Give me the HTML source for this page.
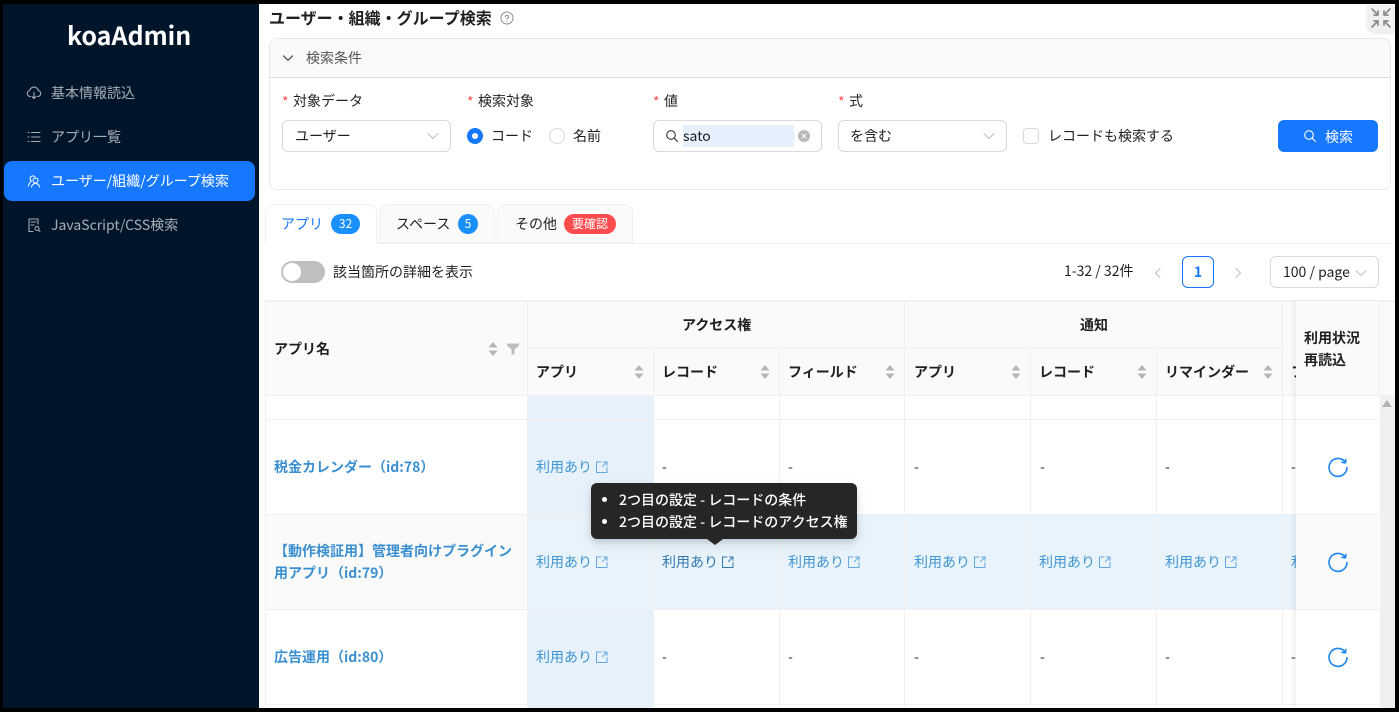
<!DOCTYPE html>
<html lang="ja"><head><meta charset="utf-8"><title>koaAdmin</title>
<style>
*{box-sizing:border-box}
html,body{margin:0;padding:0;width:1399px;height:712px;overflow:hidden;background:#000}
body{position:relative;font-family:"Noto Sans CJK JP","Liberation Sans",sans-serif;font-size:14px;color:rgba(0,0,0,.88)}
div,svg.a{position:absolute}
.t{white-space:nowrap;line-height:20px;position:absolute}
.b{font-weight:700}
.l{color:#4096d0}
.lb{color:#3a8fd0;font-weight:700;font-size:14px}
.m{color:rgba(255,255,255,.65);font-size:14px}
.s{position:absolute;fill:none;stroke-linecap:round;stroke-linejoin:round}
.ln{background:#f0f0f0}
.box{background:#fff;border:1px solid #d9d9d9;border-radius:6px}
.r{color:#ff4d4f;font-size:14px}
</style></head><body>
<div id="page" style="left:3px;top:4px;width:1392px;height:704px;background:#fff;overflow:hidden">
<div style="left:-3px;top:-4px;width:1399px;height:712px">

<!-- sidebar -->
<div style="left:3px;top:4px;width:256px;height:704px;background:#001529"></div>
<span class="t b" style="left:67px;top:20px;font-size:25px;line-height:30px;color:#fff">koaAdmin</span>
<div style="left:4px;top:161px;width:251px;height:40px;background:#1677ff;border-radius:8px"></div>
<svg class="s" style="left:26px;top:85px" width="16" height="16" viewBox="0 0 16 16" stroke="#a6adb4" stroke-width="1.100"><path d="M4.500 11.500H4A3 3 0 0 1 3.600 5.600 4.500 4.500 0 0 1 12.400 5.600 3 3 0 0 1 12 11.500H11.500M8 7.500V13.500M6.200 11.700 8 13.500 9.800 11.700"/></svg>
<span class="t m" style="left:51px;top:83px">基本情報読込</span>
<svg class="s" style="left:26px;top:129px" width="16" height="16" viewBox="0 0 16 16" stroke="#a6adb4" stroke-width="1.100"><path d="M5.500 3.500H14M5.500 8H14M5.500 12.500H14M2 3.500H3M2 8H3M2 12.500H3"/></svg>
<span class="t m" style="left:51px;top:127px">アプリ一覧</span>
<svg class="s" style="left:26px;top:173px" width="16" height="16" viewBox="0 0 16 16" stroke="#fff" stroke-width="1"><circle cx="9.500" cy="7.500" r="2.500"/><path d="M5.500 14C6 11.500 7.500 10.500 9.500 10.500S13 11.500 13.500 14M9 3.800A3 3 0 0 0 4 5C4 6.500 4.500 7.500 5.500 8C3.800 9 2.800 10.800 2.300 13"/></svg>
<span class="t" style="left:51px;top:171px;color:#fff">ユーザー/組織/グループ検索</span>
<svg class="s" style="left:26px;top:217px" width="16" height="16" viewBox="0 0 16 16" stroke="#a6adb4" stroke-width="1.100"><path d="M7 14.500H3V2H12V7M5 5H10M5 8H8"/><circle cx="11" cy="11.500" r="2"/><path d="M12.500 13 14 14.500"/></svg>
<span class="t m" style="left:51px;top:215px">JavaScript/CSS検索</span>

<!-- title -->
<span class="t b" style="left:269px;top:7px;font-size:16px">ユーザー・組織・グループ検索</span>
<svg class="s" style="left:500px;top:11px" width="14" height="14" viewBox="0 0 14 14" stroke="#8c8c8c" stroke-width="1"><circle cx="7" cy="7" r="6"/><path d="M5.400 5.600A1.600 1.600 0 1 1 7 7.400V8.200M7 10V10.100"/></svg>
<div style="left:1367px;top:5px;width:28px;height:27px;background:#f0f0f0;border-radius:0 0 0 8px;box-shadow:0 1px 3px rgba(0,0,0,.12)"></div>
<svg class="s" style="left:1368px;top:5px" width="26" height="26" viewBox="0 0 26 26" stroke="#8a8a8a" stroke-width="1.700"><path d="M4 4 10 10M6 10H10V6M22 4 16 10M20 10H16V6M4 22 10 16M6 16H10V20M22 22 16 16M20 16H16V20"/></svg>

<!-- search panel -->
<div style="left:269px;top:38px;width:1122px;height:152px;border:1px solid #e8e8e8;border-radius:8px;overflow:hidden;background:#fff">
  <div style="left:0;top:0;width:1120px;height:39px;background:#fafafa;border-bottom:1px solid #d9d9d9"></div>
</div>
<svg class="s" style="left:282px;top:52px" width="12" height="12" viewBox="0 0 12 12" stroke="#444" stroke-width="1.100"><path d="M1.500 3.800 6 8.300 10.500 3.800"/></svg>
<span class="t" style="left:306px;top:48px;color:#555">検索条件</span>

<span class="t r" style="left:282px;top:92px">*</span><span class="t" style="left:293px;top:91px">対象データ</span>
<span class="t r" style="left:467px;top:92px">*</span><span class="t" style="left:478px;top:91px">検索対象</span>
<span class="t r" style="left:653px;top:92px">*</span><span class="t" style="left:664px;top:91px">値</span>
<span class="t r" style="left:838px;top:92px">*</span><span class="t" style="left:849px;top:91px">式</span>

<div class="box" style="left:282px;top:120px;width:169px;height:32px"></div>
<span class="t" style="left:295px;top:126px">ユーザー</span>
<svg class="s" style="left:427px;top:130px" width="12" height="12" viewBox="0 0 12 12" stroke="#bfbfbf" stroke-width="1"><path d="M1 3.500 6 8.500 11 3.500"/></svg>

<div style="left:467px;top:128px;width:16px;height:16px;border-radius:50%;background:#1677ff"></div>
<div style="left:472px;top:133px;width:6px;height:6px;border-radius:50%;background:#fff"></div>
<span class="t" style="left:491px;top:126px">コード</span>
<div style="left:549px;top:128px;width:16px;height:16px;border-radius:50%;border:1px solid #d9d9d9;background:#fff"></div>
<span class="t" style="left:573px;top:126px">名前</span>

<div class="box" style="left:653px;top:120px;width:169px;height:32px"></div>
<div style="left:683px;top:125px;width:111px;height:22px;background:#e6f0fc"></div>
<svg class="s" style="left:665px;top:129px" width="14" height="14" viewBox="0 0 14 14" stroke="#333" stroke-width="1.100"><circle cx="6" cy="6" r="4.300"/><path d="M9.200 9.200 12.500 12.500"/></svg>
<span class="t" style="left:683px;top:126px">sato</span>
<div style="left:798px;top:130px;width:12px;height:12px;border-radius:50%;background:#b8b8b8"></div>
<svg class="s" style="left:798px;top:130px" width="12" height="12" viewBox="0 0 12 12" stroke="#fff" stroke-width="1"><path d="M4 4 8 8M8 4 4 8"/></svg>

<div class="box" style="left:838px;top:120px;width:169px;height:32px"></div>
<span class="t" style="left:850px;top:126px">を含む</span>
<svg class="s" style="left:983px;top:130px" width="12" height="12" viewBox="0 0 12 12" stroke="#bfbfbf" stroke-width="1"><path d="M1 3.500 6 8.500 11 3.500"/></svg>

<div class="box" style="left:1023px;top:128px;width:16px;height:16px;border-radius:4px"></div>
<span class="t" style="left:1048px;top:126px">レコードも検索する</span>

<div style="left:1278px;top:120px;width:100px;height:32px;background:#1677ff;border-radius:6px"></div>
<svg class="s" style="left:1303px;top:129px" width="14" height="14" viewBox="0 0 14 14" stroke="#fff" stroke-width="1.100"><circle cx="6" cy="6" r="4.300"/><path d="M9.200 9.200 12.500 12.500"/></svg>
<span class="t" style="left:1325px;top:127px;color:#fff">検索</span>

<!-- tabs -->
<div style="left:265px;top:243px;width:1126px;height:1px;background:#f0f0f0"></div>
<div style="left:265px;top:204px;width:112px;height:40px;background:#fff;border:1px solid #f0f0f0;border-bottom:0;border-radius:8px 8px 0 0"></div>
<div style="left:379px;top:204px;width:116px;height:39px;background:#fafafa;border:1px solid #f0f0f0;border-radius:8px 8px 0 0"></div>
<div style="left:497px;top:204px;width:136px;height:39px;background:#fafafa;border:1px solid #f0f0f0;border-radius:8px 8px 0 0"></div>
<span class="t" style="left:281px;top:214px;color:#1677ff">アプリ</span>
<div style="left:331px;top:214px;width:29px;height:20px;border-radius:10px;background:#1890ff"></div>
<span class="t" style="left:331px;top:214px;width:29px;text-align:center;color:#fff;font-size:12px">32</span>
<span class="t" style="left:396px;top:214px">スペース</span>
<div style="left:458px;top:214px;width:20px;height:20px;border-radius:10px;background:#1890ff"></div>
<span class="t" style="left:458px;top:214px;width:20px;text-align:center;color:#fff;font-size:12px">5</span>
<span class="t" style="left:515px;top:214px">その他</span>
<div style="left:564px;top:214px;width:52px;height:20px;border-radius:10px;background:#ff4d4f"></div>
<span class="t" style="left:564px;top:214px;width:52px;text-align:center;color:#fff;font-size:12px">要確認</span>

<!-- toolbar -->
<div style="left:281px;top:261px;width:44px;height:22px;border-radius:11px;background:#bfbfbf"></div>
<div style="left:283px;top:263px;width:18px;height:18px;border-radius:50%;background:#fff"></div>
<span class="t" style="left:333px;top:262px">該当箇所の詳細を表示</span>
<span class="t" style="left:1064px;top:261px;font-size:14px">1-32 / 32件</span>
<svg class="s" style="left:1152px;top:267px" width="12" height="12" viewBox="0 0 12 12" stroke="#bfbfbf" stroke-width="1.100"><path d="M8 1.500 3.500 6 8 10.500"/></svg>
<div style="left:1182px;top:256px;width:32px;height:32px;border:1px solid #1677ff;border-radius:6px;background:#fff"></div>
<span class="t" style="left:1182px;top:262px;width:32px;text-align:center;color:#1677ff;font-weight:700">1</span>
<svg class="s" style="left:1232px;top:267px" width="12" height="12" viewBox="0 0 12 12" stroke="#bfbfbf" stroke-width="1.100"><path d="M4 1.500 8.500 6 4 10.500"/></svg>
<div class="box" style="left:1270px;top:256px;width:109px;height:32px"></div>
<span class="t" style="left:1283px;top:262px">100 / page</span>
<svg class="s" style="left:1355px;top:267px" width="12" height="12" viewBox="0 0 12 12" stroke="#bfbfbf" stroke-width="1"><path d="M1 3.500 6 8.500 11 3.500"/></svg>

<!-- table backgrounds -->
<div style="left:265px;top:301px;width:1130px;height:95px;background:#fafafa"></div>
<div style="left:265px;top:300px;width:1130px;height:2px;background:#f0f0f0"></div>
<div style="left:527px;top:396px;width:126px;height:312px;background:#e6f1fb"></div>
<div style="left:265px;top:515px;width:262px;height:94px;background:#fafafa"></div>
<div style="left:527px;top:515px;width:769px;height:94px;background:#e8f3fb"></div>

<!-- horizontal lines -->
<div class="ln" style="left:527px;top:348px;width:755px;height:1px"></div>
<div class="ln" style="left:265px;top:395px;width:1031px;height:1px"></div>
<div class="ln" style="left:265px;top:419px;width:1031px;height:1px"></div>
<div class="ln" style="left:265px;top:514px;width:1031px;height:1px"></div>
<div class="ln" style="left:265px;top:609px;width:1031px;height:1px"></div>
<div class="ln" style="left:265px;top:704px;width:1031px;height:1px"></div>
<!-- vertical lines -->
<div class="ln" style="left:265px;top:301px;width:1px;height:407px"></div>
<div class="ln" style="left:527px;top:301px;width:1px;height:407px"></div>
<div class="ln" style="left:653px;top:349px;width:1px;height:359px"></div>
<div class="ln" style="left:779px;top:349px;width:1px;height:359px"></div>
<div class="ln" style="left:904px;top:301px;width:1px;height:407px"></div>
<div class="ln" style="left:1030px;top:349px;width:1px;height:359px"></div>
<div class="ln" style="left:1156px;top:349px;width:1px;height:359px"></div>
<div class="ln" style="left:1282px;top:301px;width:1px;height:407px"></div>

<!-- headers -->
<span class="t b" style="left:274px;top:339px">アプリ名</span>
<span class="t b" style="left:682px;top:315px;font-size:14px">アクセス権</span>
<span class="t b" style="left:1080px;top:315px;font-size:14px">通知</span>
<span class="t b" style="left:536px;top:362px">アプリ</span>
<span class="t b" style="left:662px;top:362px">レコード</span>
<span class="t b" style="left:788px;top:362px">フィールド</span>
<span class="t b" style="left:914px;top:362px">アプリ</span>
<span class="t b" style="left:1039px;top:362px">レコード</span>
<span class="t b" style="left:1165px;top:362px">リマインダー</span>
<span class="t b" style="left:1291px;top:362px">フ</span>
<svg class="a" style="left:0;top:0" width="1399" height="712">
<g fill="#b5b5b5">
<path d="M493 342 497.500 347.500H488.500ZM493 356 488.500 350.500H497.500Z"/>
<path d="M639 365 643.500 370.500H634.500ZM639 379 634.500 373.500H643.500Z"/>
<path d="M765 365 769.500 370.500H760.500ZM765 379 760.500 373.500H769.500Z"/>
<path d="M890 365 894.500 370.500H885.500ZM890 379 885.500 373.500H894.500Z"/>
<path d="M1016 365 1020.500 370.500H1011.500ZM1016 379 1011.500 373.500H1020.500Z"/>
<path d="M1142 365 1146.500 370.500H1137.500ZM1142 379 1137.500 373.500H1146.500Z"/>
<path d="M1268 365 1272.500 370.500H1263.500ZM1268 379 1263.500 373.500H1272.500Z"/>
<path d="M507 343.500H519V345.500L514.500 349.500V354.500H511.500V349.500L507 345.500Z" fill="#bdbdbd"/>
</g>
</svg>

<!-- rows -->
<span class="t lb" style="left:274px;top:457px">税金カレンダー（id:78）</span>
<span class="t lb" style="left:274px;top:541px">【動作検証用】管理者向けプラグイン</span>
<span class="t lb" style="left:274px;top:563px">用アプリ（id:79）</span>
<span class="t lb" style="left:274px;top:647px">広告運用（id:80）</span>

<span class="t l" style="left:536px;top:457px">利用あり</span>
<span class="t l" style="left:536px;top:552px">利用あり</span>
<span class="t l" style="left:536px;top:647px">利用あり</span>
<span class="t l" style="left:662px;top:552px;color:#3379ad">利用あり</span>
<span class="t l" style="left:788px;top:552px">利用あり</span>
<span class="t l" style="left:914px;top:552px">利用あり</span>
<span class="t l" style="left:1039px;top:552px">利用あり</span>
<span class="t l" style="left:1165px;top:552px">利用あり</span>
<span class="t l" style="left:1291px;top:552px">利用あり</span>
<svg class="s a" style="left:0;top:0" width="1399" height="712" stroke="#64a9dc" stroke-width="1">
<path d="M601 462H596.500V472.500H607V467.500M603.500 462H607V465.500M607 462 602.500 466.500"/>
<path d="M601 557H596.500V567.500H607V562.500M603.500 557H607V560.500M607 557 602.500 561.500"/>
<path d="M601 652H596.500V662.500H607V657.500M603.500 652H607V655.500M607 652 602.500 656.500"/>
<path stroke="#3379ad" d="M727 557H722.500V567.500H733V562.500M729.500 557H733V560.500M733 557 728.500 561.500"/>
<path d="M853 557H848.500V567.500H859V562.500M855.500 557H859V560.500M859 557 854.500 561.500"/>
<path d="M979 557H974.500V567.500H985V562.500M981.500 557H985V560.500M985 557 980.500 561.500"/>
<path d="M1104 557H1099.500V567.500H1110V562.500M1106.500 557H1110V560.500M1110 557 1105.500 561.500"/>
<path d="M1230 557H1225.500V567.500H1236V562.500M1232.500 557H1236V560.500M1236 557 1231.500 561.500"/>
</svg>
<span class="t" style="left:662px;top:457px">-</span>
<span class="t" style="left:788px;top:457px">-</span>
<span class="t" style="left:914px;top:457px">-</span>
<span class="t" style="left:1040px;top:457px">-</span>
<span class="t" style="left:1165px;top:457px">-</span>
<span class="t" style="left:1291px;top:457px">-</span>
<span class="t" style="left:662px;top:647px">-</span>
<span class="t" style="left:788px;top:647px">-</span>
<span class="t" style="left:914px;top:647px">-</span>
<span class="t" style="left:1040px;top:647px">-</span>
<span class="t" style="left:1165px;top:647px">-</span>
<span class="t" style="left:1291px;top:647px">-</span>

<!-- fixed column -->
<div style="left:1296px;top:301px;width:83px;height:407px;background:#fff;box-shadow:-3px 0 5px rgba(0,0,0,.05)"></div>
<div style="left:1296px;top:301px;width:83px;height:95px;background:#fafafa"></div>
<div style="left:1296px;top:515px;width:83px;height:94px;background:#fafafa"></div>
<div class="ln" style="left:1296px;top:395px;width:99px;height:1px"></div>
<div class="ln" style="left:1296px;top:419px;width:83px;height:1px"></div>
<div class="ln" style="left:1296px;top:514px;width:83px;height:1px"></div>
<div class="ln" style="left:1296px;top:609px;width:83px;height:1px"></div>
<div class="ln" style="left:1296px;top:704px;width:83px;height:1px"></div>
<div class="ln" style="left:1379px;top:301px;width:1px;height:95px"></div>
<span class="t b" style="left:1304px;top:328px;font-size:14px">利用状況</span>
<span class="t b" style="left:1304px;top:350px;font-size:14px">再読込</span>
<div style="left:1380px;top:396px;width:15px;height:312px;background:#f0f0f0"></div>
<svg class="a" style="left:1381px;top:399px" width="12" height="10" viewBox="0 0 12 10"><path d="M6 1 11 8H1Z" fill="#b3b3b3"/></svg>
<svg class="s a" style="left:1327px;top:456px" width="22" height="22" viewBox="0 0 22 22" stroke="#1c86ee" stroke-width="1.600"><path d="M17.800 5.500A9 9 0 1 0 20 11.500"/><path d="M18.800 3.500 18.500 6.800 15 6.300"/></svg>
<svg class="s a" style="left:1327px;top:551px" width="22" height="22" viewBox="0 0 22 22" stroke="#1c86ee" stroke-width="1.600"><path d="M17.800 5.500A9 9 0 1 0 20 11.500"/><path d="M18.800 3.500 18.500 6.800 15 6.300"/></svg>
<svg class="s a" style="left:1327px;top:646px" width="22" height="22" viewBox="0 0 22 22" stroke="#1c86ee" stroke-width="1.600"><path d="M17.800 5.500A9 9 0 1 0 20 11.500"/><path d="M18.800 3.500 18.500 6.800 15 6.300"/></svg>

<!-- tooltip -->
<div style="left:591px;top:483px;width:266px;height:56px;background:#262626;border-radius:6px;box-shadow:0 6px 16px rgba(0,0,0,.08),0 3px 6px rgba(0,0,0,.12)"></div>
<svg class="a" style="left:707px;top:539px" width="16" height="6" viewBox="0 0 16 6"><path d="M0 0H16L8 6Z" fill="#262626"/></svg>
<div style="left:602px;top:497px;width:5px;height:5px;border-radius:50%;background:#fff"></div>
<div style="left:602px;top:519px;width:5px;height:5px;border-radius:50%;background:#fff"></div>
<span class="t" style="left:619px;top:490px;color:#fff;font-size:14px;font-weight:500">2つ目の設定 - レコードの条件</span>
<span class="t" style="left:619px;top:512px;color:#fff;font-size:14px;font-weight:500">2つ目の設定 - レコードのアクセス権</span>

</div></div>
</body></html>
